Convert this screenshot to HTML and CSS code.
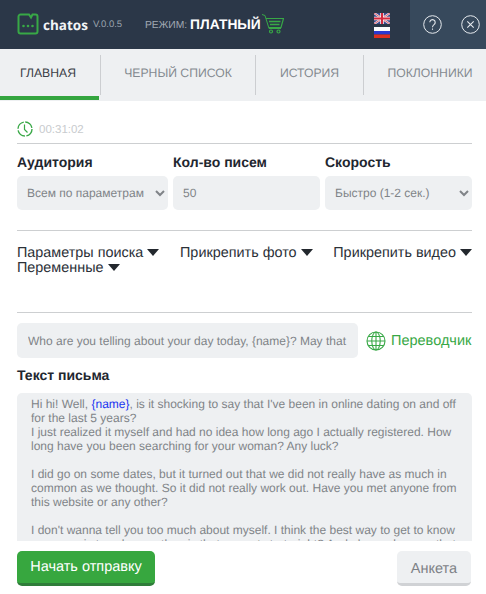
FILE: index.html
```html
<!DOCTYPE html>
<html lang="ru">
<head>
    <meta charset="UTF-8">
    <meta name="viewport" content="width=device-width, initial-scale=1.0">
    <title>Chatos</title>
    <link rel="stylesheet" href="styles.css">
</head>
<body>

<!-- Шапка -->
<header class="header">
    <div class="brand">
        <svg class="logo" width="22" height="22" viewBox="0 0 22 22" fill="none">
            <path d="M3.5 1.5H12L14 4.5 15.5 1.5H18.5a2 2 0 0 1 2 2V18.5a2 2 0 0 1-2 2H3.5a2 2 0 0 1-2-2V3.5a2 2 0 0 1 2-2Z" stroke="#38a846" stroke-width="2"/>
            <circle cx="6.5" cy="13" r="1.3" fill="#38a846"/>
            <circle cx="11" cy="13" r="1.3" fill="#38a846"/>
            <circle cx="15.5" cy="13" r="1.3" fill="#38a846"/>
        </svg>
        <span class="brand-name">chatos</span>
        <span class="brand-version">V.0.0.5</span>
    </div>
    <div class="mode">
        <span class="mode-label">РЕЖИМ:</span>
        <span class="mode-value">ПЛАТНЫЙ</span>
        <svg width="22" height="20" viewBox="0 0 22 20" fill="none" stroke="#38a846">
            <path d="M0 .5 3 1.5 7 14.5H19" stroke-width="1"/>
            <path d="M4 4.5H21.5L19 13.5H7" stroke-width="1.2"/>
            <path d="M7 7.5H18.5M8 10.5H17.5" stroke-width="1.4"/>
            <circle cx="9" cy="17.5" r="1.5" stroke-width="1.2"/>
            <circle cx="16.5" cy="17.5" r="1.5" stroke-width="1.2"/>
        </svg>
    </div>
    <div class="flags">
        <svg width="16" height="11" viewBox="0 0 16 11">
            <rect width="16" height="11" fill="#3b4a8c"/>
            <path d="M0 0 16 11M16 0 0 11" stroke="#f4e6ea" stroke-width="2.2"/>
            <path d="M0 0 16 11M16 0 0 11" stroke="#d23a4a" stroke-width=".8"/>
            <path d="M8 0V11M0 5.5H16" stroke="#f6edef" stroke-width="3.6"/>
            <path d="M8 0V11M0 5.5H16" stroke="#d4283c" stroke-width="2"/>
        </svg>
        <svg width="16" height="11" viewBox="0 0 16 11">
            <rect width="16" height="4" fill="#fbfbfb"/>
            <rect y="4" width="16" height="3.5" fill="#2a39d0"/>
            <rect y="7.5" width="16" height="3.5" fill="#e0301e"/>
        </svg>
    </div>
    <div class="header-actions">
        <svg width="19" height="19" viewBox="0 0 19 19" fill="none" stroke="#e6eaee">
            <circle cx="9.5" cy="9.5" r="8.8"/>
            <path d="M6.8 7.3a2.7 2.7 0 1 1 4.2 2.3c-1 .7-1.5 1.2-1.5 2.7" stroke-width="1.1"/>
            <path d="M9.5 13.5v1.3" stroke-width="1.1"/>
        </svg>
        <svg width="19" height="19" viewBox="0 0 19 19" fill="none" stroke="#e6eaee">
            <circle cx="9.5" cy="9.5" r="8.8"/>
            <path d="M6.3 6.3 12.7 12.7M12.7 6.3 6.3 12.7" stroke-width="1.1"/>
        </svg>
    </div>
</header>

<!-- Вкладки -->
<nav class="tabs">
    <div class="tab tab-active">ГЛАВНАЯ</div>
    <div class="tab tab-black">ЧЕРНЫЙ СПИСОК</div>
    <div class="tab tab-history">ИСТОРИЯ</div>
    <div class="tab tab-fans">ПОКЛОННИКИ</div>
</nav>

<main class="content">
    <div class="timer">
        <svg width="16" height="16" viewBox="0 0 16 16" fill="none" stroke="#38a846">
            <circle cx="8" cy="8" r="7" stroke-width="1.4" stroke-dasharray="9.5 1.5"/>
            <path d="M7.5 3.5V8.5L10.5 11.5" stroke-width="1.2"/>
        </svg>
        <span class="timer-value">00:31:02</span>
    </div>

    <div class="settings">
        <div class="field">
            <label for="audience">Аудитория</label>
            <select id="audience" class="control">
                <option>Всем по параметрам</option>
            </select>
        </div>
        <div class="field">
            <label for="count">Кол-во писем</label>
            <input id="count" class="control" type="text" value="50">
        </div>
        <div class="field">
            <label for="speed">Скорость</label>
            <select id="speed" class="control">
                <option>Быстро (1-2 сек.)</option>
            </select>
        </div>
    </div>

    <div class="options">
        <div class="options-row">
            <span class="option">Параметры поиска</span>
            <span class="option">Прикрепить фото</span>
            <span class="option">Прикрепить видео</span>
        </div>
        <div class="options-row">
            <span class="option">Переменные</span>
        </div>
    </div>

    <div class="subject">
        <input class="control subject-input" type="text" value="Who are you telling about your day today, {name}? May that make you smile">
        <div class="translator">
            <svg width="20" height="20" viewBox="0 0 20 20" fill="none" stroke="#38a846" stroke-width="1.1">
                <circle cx="10" cy="10" r="9"/>
                <ellipse cx="10" cy="10" rx="4.2" ry="9"/>
                <path d="M10 1V19M1 10H19M2.3 5.5H17.7M2.3 14.5H17.7"/>
            </svg>
            <span>Переводчик</span>
        </div>
    </div>

    <h2 class="letter-title">Текст письма</h2>
    <div class="letter">
        Hi hi! Well, <span class="var">{name}</span>, is it shocking to say that I've been in online dating on and off for the last 5 years?<br>
        I just realized it myself and had no idea how long ago I actually registered. How long have you been searching for your woman? Any luck?<br>
        <br>
        I did go on some dates, but it turned out that we did not really have as much in common as we thought. So it did not really work out. Have you met anyone from this website or any other?<br>
        <br>
        I don't wanna tell you too much about myself. I think the best way to get to know someone is to ask one other, is that a great start, right? And also make sure that I will be honest with you.
    </div>

    <div class="actions">
        <button class="btn btn-start">Начать отправку</button>
        <button class="btn btn-form">Анкета</button>
    </div>
</main>

</body>
</html>
```

FILE: styles.css
```css
* {
    box-sizing: border-box;
}

html, body {
    height: 100%;
}

body {
    margin: 0;
    font-family: 'Liberation Sans', Arial, sans-serif;
    background: #fff;
    color: #1f2730;
    overflow: hidden;
    text-rendering: geometricPrecision;
}

/* Шапка */
.header {
    display: flex;
    align-items: center;
    height: 49px;
    background: #2b3748;
    padding-left: 17px;
}

.brand {
    display: flex;
    align-items: center;
    width: 128px;
}

.logo {
    margin-top: -1px;
}

.brand-name {
    margin-left: 4px;
    color: #f2f4f6;
    font-family: 'Open Sans', sans-serif;
    font-size: 13.5px;
    font-weight: 700;
}

.brand-version {
    margin-left: 5px;
    color: #9aa3ad;
    font-size: 9.5px;
}

.mode {
    display: flex;
    align-items: center;
    width: 229px;
}

.mode-label {
    color: #a0a8b2;
    font-size: 10.3px;
    margin-top: 2px;
}

.mode-value {
    margin-left: 3px;
    color: #fff;
    font-size: 13.8px;
    font-weight: 700;
}

.mode svg {
    margin-left: 1px;
    margin-top: -2px;
}

.flags {
    display: flex;
    flex-direction: column;
    gap: 3px;
    width: 36px;
    padding-top: 1px;
}

.flags svg {
    display: block;
}

.header-actions {
    flex: 1;
    display: flex;
    align-items: center;
    gap: 19px;
    height: 100%;
    background: #37495c;
    padding-left: 13px;
}

/* Вкладки */
.tabs {
    display: flex;
    height: 52px;
    background: #eef0f2;
    overflow: hidden;
}

.tab {
    position: relative;
    display: flex;
    align-items: center;
    justify-content: center;
    height: 40px;
    margin-top: 6px;
    padding-bottom: 4px;
    color: #848a90;
    font-size: 12.2px;
    border-right: 1px solid #ccced1;
    flex-shrink: 0;
}

.tab-active {
    width: 101px;
    padding-right: 4px;
    color: #3b4047;
}

.tab-active:after {
    content: '';
    position: absolute;
    left: 0;
    right: 1px;
    bottom: -5px;
    height: 4px;
    background: #34a53f;
}

.tab-black {
    width: 155px;
}

.tab-history {
    width: 108px;
}

.tab-fans {
    width: 122px;
    padding-left: 10px;
    border-right: none;
}

/* Основная часть */
.content {
    padding: 0 14px 0 17px;
}

.timer {
    display: flex;
    align-items: center;
    gap: 6px;
    height: 43px;
    padding-top: 14px;
    border-bottom: 1px solid #cdcfd1;
    color: #c8cbce;
    font-size: 11.5px;
}

.timer-value {
    padding-top: 2px;
}

.settings {
    display: grid;
    grid-template-columns: 151px 147px 147px;
    gap: 5px;
    height: 87px;
    padding-top: 10px;
    border-bottom: 1px solid #cdcfd1;
}

.field label {
    display: block;
    height: 22px;
    font-size: 14px;
    font-weight: 700;
    line-height: 16px;
}

.control {
    display: block;
    width: 100%;
    height: 34px;
    border: none;
    border-radius: 5px;
    background-color: #eef0f2;
    color: #808488;
    font-family: 'Liberation Sans', Arial, sans-serif;
    font-size: 12px;
    padding: 0 10px;
    outline: none;
    text-rendering: geometricPrecision;
}

select.control {
    padding: 0 6px;
}

.options {
    height: 82px;
    padding-top: 15px;
    border-bottom: 1px solid #cdcfd1;
}

.options-row {
    display: flex;
    justify-content: space-between;
    height: 15px;
    font-size: 14.4px;
    line-height: 15px;
    color: #2c3138;
}

.option:after {
    content: '';
    display: inline-block;
    margin-left: 4px;
    border-left: 6px solid transparent;
    border-right: 6px solid transparent;
    border-top: 7px solid #23282e;
    vertical-align: 1px;
}

.subject {
    display: flex;
    align-items: center;
    margin-top: 10px;
}

.subject-input {
    flex: none;
    width: 341px;
    height: 35px;
    padding: 0 11px;
}

.translator {
    display: flex;
    align-items: center;
    gap: 5px;
    margin-left: 8px;
    color: #38a846;
    font-size: 14.5px;
    white-space: nowrap;
}

.letter-title {
    margin: 9px 0 0;
    height: 26px;
    font-size: 14px;
    font-weight: 700;
    line-height: 16px;
}

.letter {
    height: 148px;
    padding: 4px 14px 0;
    background: #eef0f2;
    border-radius: 5px 5px 0 0;
    color: #808488;
    font-size: 12px;
    line-height: 14px;
    overflow: hidden;
}

.var {
    color: #1a35f0;
}

.actions {
    display: flex;
    justify-content: space-between;
    margin-top: 10px;
}

.btn {
    height: 35px;
    border: none;
    border-radius: 5px;
    font-family: 'Liberation Sans', Arial, sans-serif;
    font-size: 14.5px;
    padding: 0;
    text-rendering: geometricPrecision;
}

.btn-start {
    width: 138px;
    background: #37a73f;
    border-bottom: 3px solid #2f7d3a;
    color: #fff;
}

.btn-form {
    width: 74px;
    margin-right: 1px;
    background: #eef0f2;
    border-bottom: 3px solid #d0d2d5;
    color: #7e8287;
    padding-top: 3px;
}
```
